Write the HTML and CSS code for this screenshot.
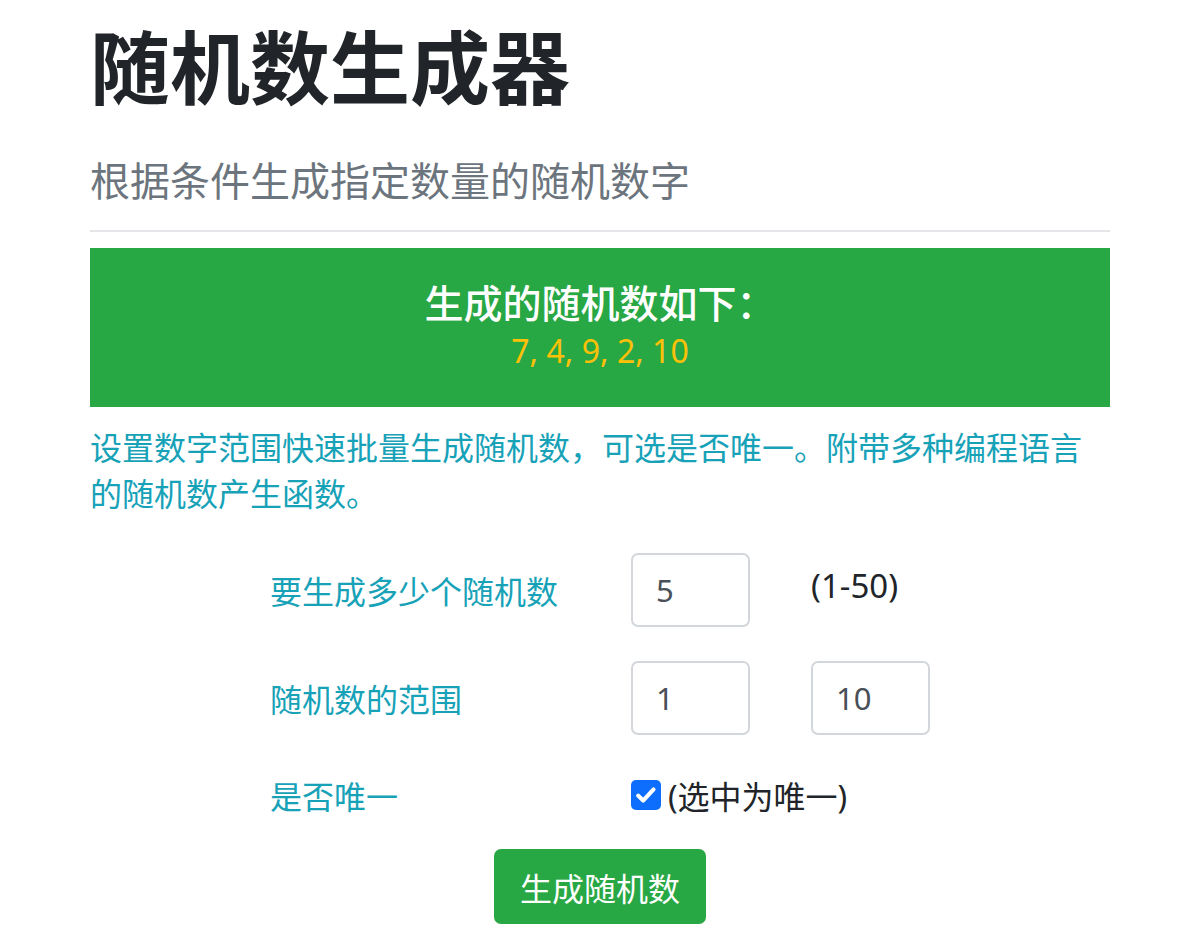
FILE: index.html
```html
<!DOCTYPE html>
<html lang="zh-CN">
<head>
<meta charset="utf-8">
<title>随机数生成器</title>
<link rel="stylesheet" href="styles.css">
</head>
<body>
<div class="container">
  <h1 class="title">随机数生成器</h1>
  <p class="lead">根据条件生成指定数量的随机数字</p>
  <hr class="divider">
  <div class="result">
    <div class="result-title">生成的随机数如下：</div>
    <div class="result-nums">7, 4, 9, 2, 10</div>
  </div>
  <p class="desc">设置数字范围快速批量生成随机数，可选是否唯一。附带多种编程语言的随机数产生函数。</p>
  <form class="form">
    <label class="label">要生成多少个随机数</label>
    <input class="field" type="text" value="5">
    <span class="hint">(1-50)</span>

    <label class="label">随机数的范围</label>
    <input class="field" type="text" value="1">
    <input class="field" type="text" value="10">

    <label class="label">是否唯一</label>
    <span class="check-wrap">
      <span class="checkbox"><svg viewBox="0 0 20 20" width="26" height="26"><path d="M4 10.5l3.8 3.8 8-8.6" fill="none" stroke="#fff" stroke-width="3.2" stroke-linecap="round" stroke-linejoin="round"/></svg></span>
      <span class="check-text">(选中为唯一)</span>
    </span>
  </form>
  <div class="actions">
    <button class="btn" type="button">生成随机数</button>
  </div>
</div>
</body>
</html>
```
FILE: styles.css
```css
html, body {
  margin: 0;
  padding: 0;
  background: #fff;
}
body {
  font-family: "Noto Sans", "Noto Sans CJK SC", sans-serif;
  color: #212529;
}
.container {
  padding: 0 90px;
}
.title {
  margin: 0;
  padding-top: 15px;
  font-family: "Noto Sans CJK SC", sans-serif;
  font-size: 80px;
  line-height: 96px;
  font-weight: 700;
  color: #212529;
}
.lead {
  margin: 46px 0 0;
  font-size: 40px;
  line-height: 48px;
  color: #6c757d;
}
.divider {
  margin: 25px 0 0;
  border: 0;
  border-top: 2px solid #e3e5e8;
}
.result {
  margin-top: 16px;
  height: 159px;
  background: #28a745;
  box-sizing: border-box;
  padding-top: 28px;
  text-align: center;
}
.result-title {
  color: #fff;
  font-family: "Noto Sans CJK SC", sans-serif;
  font-size: 39px;
  line-height: 50px;
  font-weight: 500;
}
.result-nums {
  color: #ffc107;
  font-size: 32px;
  line-height: 50px;
}
.desc {
  margin: 18px 0 0;
  font-size: 32px;
  line-height: 46px;
  color: #17a2b8;
}
.form {
  width: 660px;
  margin: 36px auto 0;
  display: grid;
  grid-template-columns: 361px 180px 119px;
  grid-template-rows: 74px 74px 52px;
  row-gap: 34px;
  align-items: center;
}
.label {
  font-size: 32px;
  color: #17a2b8;
}
.field {
  box-sizing: border-box;
  width: 119px;
  height: 74px;
  border: 2px solid #d3d6da;
  border-radius: 7px;
  padding: 0 0 0 23px;
  font-family: "Noto Sans", "Noto Sans CJK SC", sans-serif;
  font-size: 31px;
  color: #495057;
  background: #fff;
  outline: none;
}
.hint {
  font-size: 33px;
  margin-top: -10px;
  color: #212529;
}
.check-wrap {
  grid-column: 2 / 4;
  display: flex;
  align-items: center;
  gap: 7px;
}
.checkbox {
  width: 30px;
  height: 30px;
  border-radius: 5px;
  background: #0d6efd;
  display: flex;
  align-items: center;
  justify-content: center;
}
.check-text {
  font-size: 32px;
  color: #212529;
}
.actions {
  margin-top: 28px;
  display: flex;
  justify-content: center;
}
.btn {
  width: 212px;
  height: 75px;
  border: 0;
  border-radius: 7px;
  background: #28a745;
  color: #fff;
  font-family: "Noto Sans CJK SC", sans-serif;
  font-size: 32px;
}
```
